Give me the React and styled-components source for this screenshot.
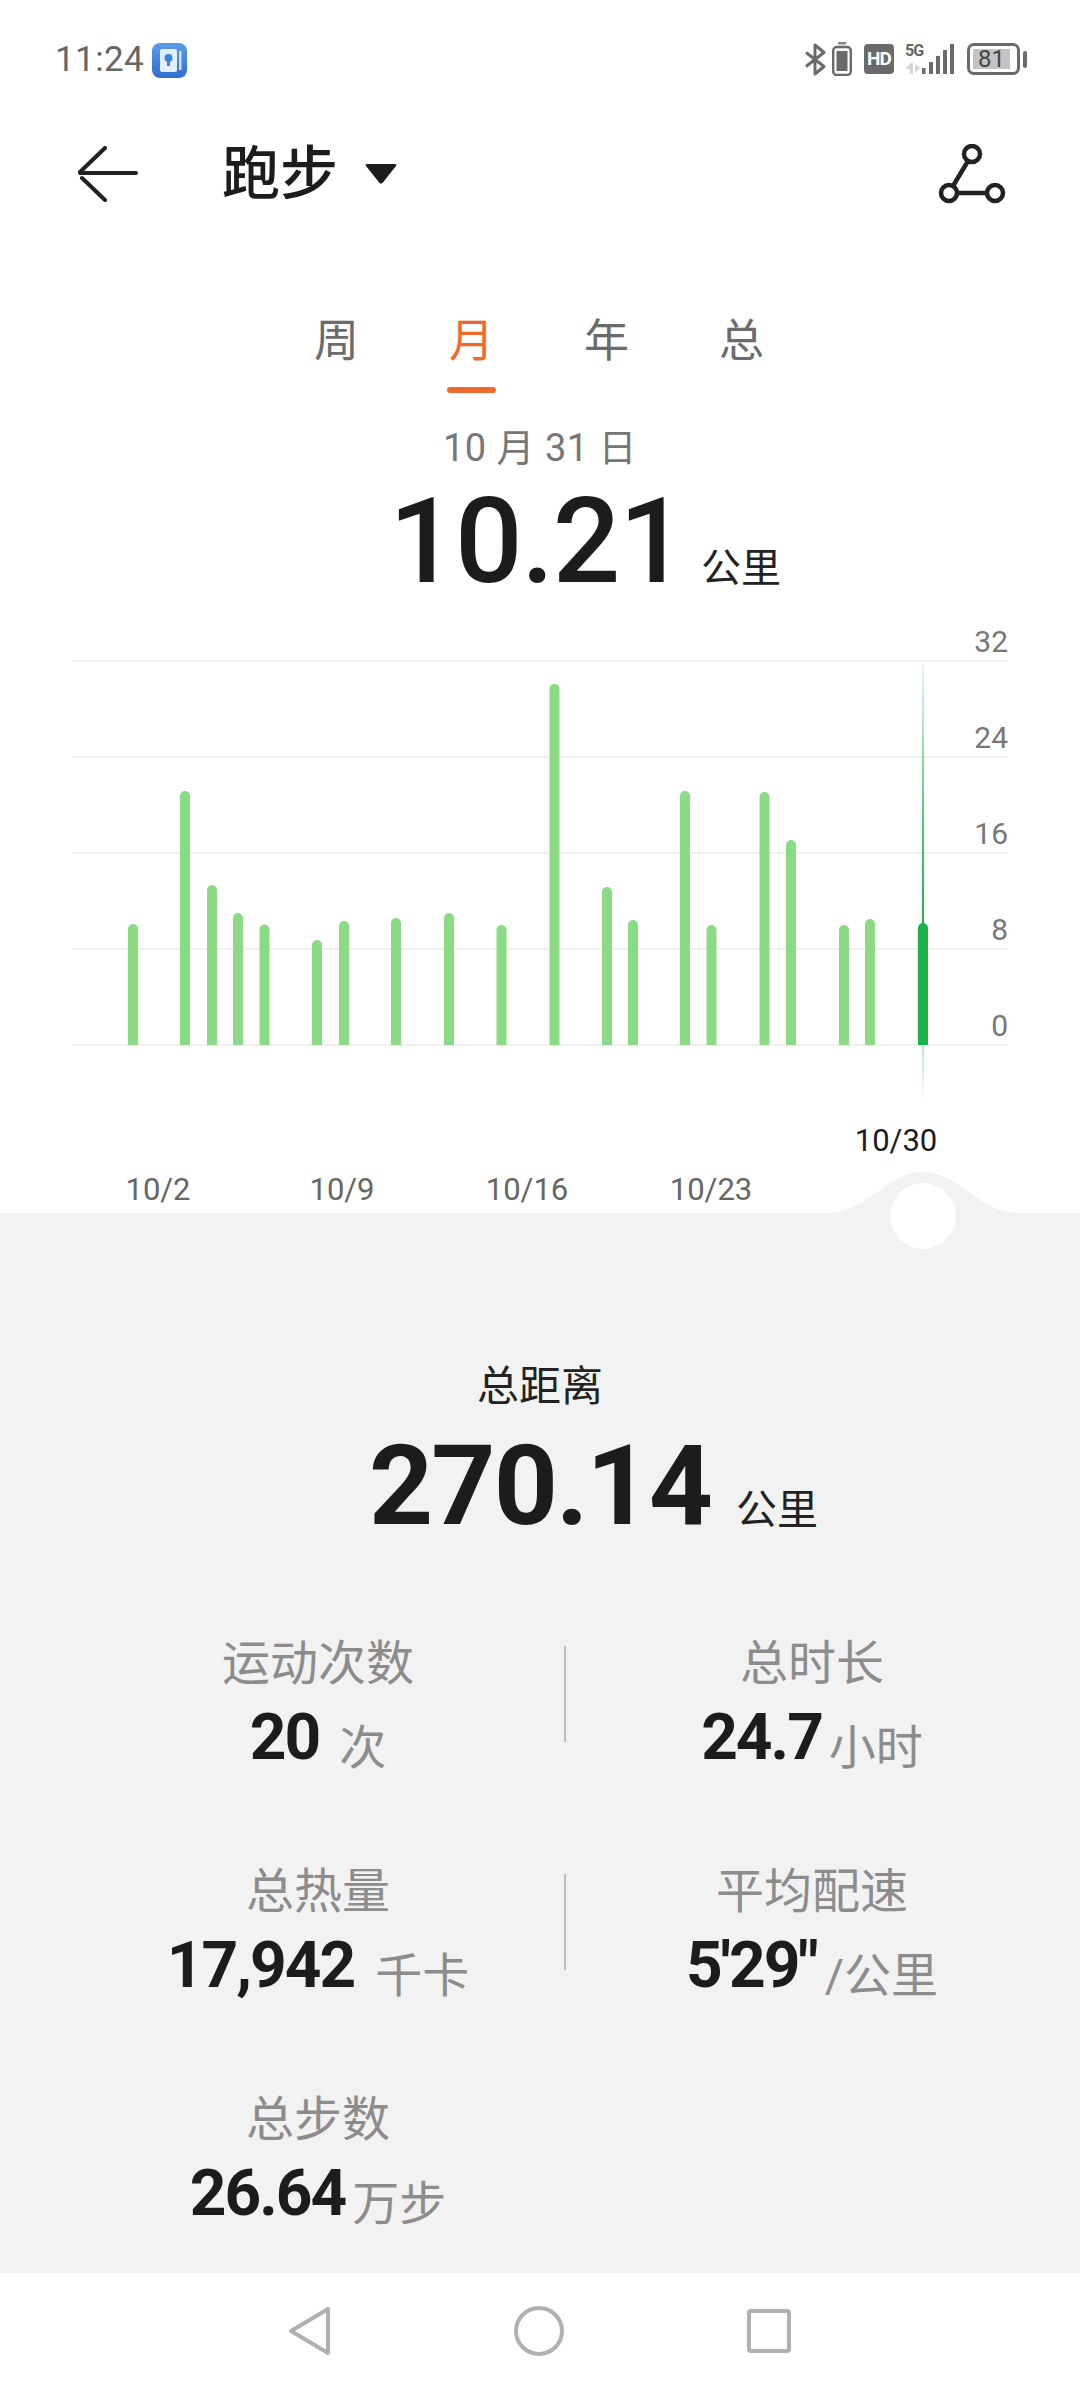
import React from 'react';
import styled, { createGlobalStyle } from 'styled-components';

const GlobalStyle = createGlobalStyle`
  html, body {
    margin: 0;
    padding: 0;
    background: #fff;
  }
  body {
    font-family: Roboto, "Noto Sans CJK SC", sans-serif;
  }
`;

const Page = styled.div`
  width: 1080px;
  height: 2388px;
  overflow: hidden;
  display: flex;
  flex-direction: column;
  background: #fff;
`;

const StatusBar = styled.div`
  height: 118px;
  padding: 0 53px 0 55px;
  display: flex;
  align-items: center;
  justify-content: space-between;
  flex-shrink: 0;
`;
const StatusLeft = styled.div`
  margin-top: 2px;
  display: flex;
  align-items: center;
  gap: 8px;
`;
const Time = styled.span`
  font-size: 35px;
  line-height: 40px;
  letter-spacing: 0.4px;
  color: #666;
`;
const StatusRight = styled.div`
  display: flex;
  align-items: center;
`;
const ChargeIcon = styled.svg`
  margin-left: 6px;
`;
const HdBadge = styled.span`
  width: 30px;
  height: 30px;
  margin: 0 11px 0 12px;
  border-radius: 4px;
  background: #6a6a6a;
  color: #fff;
  font-size: 19px;
  font-weight: 700;
  line-height: 30px;
  letter-spacing: -1px;
  text-align: center;
`;
const NetworkStack = styled.div`
  width: 17px;
  height: 30px;
  display: flex;
  flex-direction: column;
  justify-content: space-between;
`;
const FiveG = styled.span`
  font-size: 16px;
  line-height: 14px;
  font-weight: 700;
  letter-spacing: -1px;
  color: #666;
`;
const Battery = styled.div`
  width: 53px;
  height: 32px;
  margin-left: 13px;
  box-sizing: border-box;
  border: 3px solid #6a6a6a;
  border-radius: 7px;
  padding: 3px;
  display: flex;
`;
const BatteryFill = styled.div`
  width: 37px;
  background: #c4c4c4;
  color: #444;
  font-size: 24px;
  line-height: 20px;
  text-align: center;
`;
const BatteryNub = styled.div`
  width: 4px;
  height: 17px;
  margin-left: 3px;
  border-radius: 2px;
  background: #6a6a6a;
`;

const NavBar = styled.div`
  height: 112px;
  padding: 0 74px 0 76px;
  display: flex;
  align-items: center;
  flex-shrink: 0;
`;
const Title = styled.span`
  margin-left: 84px;
  font-size: 58px;
  line-height: 70px;
  font-weight: 500;
  color: #1c1c1c;
`;
const TitleCaret = styled.svg`
  margin-left: 27px;
`;
const RouteButton = styled.svg`
  margin-left: auto;
`;

const Tabs = styled.div`
  margin-top: 70px;
  margin-left: -2px;
  display: flex;
  justify-content: center;
  flex-shrink: 0;
`;
const Tab = styled.div`
  width: 135px;
  display: flex;
  flex-direction: column;
  align-items: center;
  font-size: 45px;
  line-height: 84px;
  color: ${p => (p.$active ? '#f0682a' : '#6b6b6b')};

  &::after {
    content: '';
    width: 49px;
    height: 6px;
    margin-top: 3px;
    border-radius: 3px;
    background: ${p => (p.$active ? '#ee6a2c' : 'transparent')};
  }
`;

const DateLine = styled.div`
  margin-top: 35px;
  font-size: 38px;
  line-height: 40px;
  letter-spacing: 0.5px;
  color: #777;
  text-align: center;
  flex-shrink: 0;
`;
const DayReading = styled.div`
  height: 152px;
  display: grid;
  grid-template-columns: 1fr auto 1fr;
  align-items: baseline;
  flex-shrink: 0;
`;
const DayNumber = styled.span`
  grid-column: 2;
  margin-right: 6px;
  font-size: 119px;
  line-height: 147px;
  font-weight: 500;
  letter-spacing: -1.5px;
  color: #1c1c1c;
`;
const DayUnit = styled.span`
  margin-left: 10px;
  font-size: 40px;
  color: #222;
`;

const Chart = styled.svg`
  display: block;
  flex-shrink: 0;
`;
const AxisValue = styled.text`
  font-size: 30px;
  fill: #777;
  text-anchor: end;
`;
const AxisDate = styled.text`
  font-size: 31px;
  fill: ${p => (p.$active ? '#1c1c1c' : '#666')};
  text-anchor: middle;
`;

const Panel = styled.div`
  position: relative;
  height: 1060px;
  background: #f2f2f2;
  flex-shrink: 0;
`;
const Hump = styled.svg`
  position: absolute;
  left: 823px;
  top: -41px;
`;
const Knob = styled.div`
  position: absolute;
  left: 890px;
  top: -30px;
  width: 66px;
  height: 66px;
  border-radius: 50%;
  background: #fff;
`;
const TotalLabel = styled.div`
  padding-top: 153px;
  font-size: 42px;
  line-height: 42px;
  color: #222;
  text-align: center;
`;
const TotalReading = styled.div`
  height: 120px;
  margin-top: 18px;
  display: grid;
  grid-template-columns: 1fr auto 1fr;
  align-items: baseline;
`;
const TotalNumber = styled.span`
  grid-column: 2;
  font-size: 112px;
  line-height: 120px;
  font-weight: 700;
  letter-spacing: -2px;
  color: #1c1c1c;
`;
const TotalUnit = styled.span`
  margin-left: 25px;
  font-size: 41px;
  color: #222;
`;

const StatGrid = styled.div`
  margin-top: 92px;
  padding-left: 72px;
  display: grid;
  grid-template-columns: 492px 2px 492px;
  grid-auto-rows: 228px;
`;
const Stat = styled.div`
  grid-column: ${p => (p.$right ? 3 : 1)};
  display: flex;
  flex-direction: column;
  align-items: center;
`;
const StatLabel = styled.div`
  font-size: 48px;
  line-height: 52px;
  color: #8c8c8c;
`;
const StatValue = styled.div`
  margin-top: 10px;
  display: flex;
  align-items: flex-start;
`;
const StatNumber = styled.span`
  font-size: 64px;
  line-height: 76px;
  font-weight: 700;
  letter-spacing: -2px;
  color: #1c1c1c;
`;
const StatUnit = styled.span`
  margin-top: 10px;
  margin-left: ${p => p.$gap}px;
  font-size: 47px;
  line-height: 76px;
  color: #8c8c8c;
`;
const StatDivider = styled.div`
  grid-column: 2;
  width: 2px;
  height: 96px;
  margin-top: 8px;
  background: #bdbdbd;
`;

const SystemNav = styled.div`
  flex: 1;
  display: flex;
  align-items: center;
  justify-content: center;
  gap: 183px;
  padding-top: 1px;
`;

const bars = [
  [133, 924], [185, 791], [212, 885], [238, 913], [264.5, 924.5],
  [317, 940], [344, 921], [396, 918], [449, 913], [501.5, 925],
  [554.5, 684], [607, 887], [633, 920], [685, 791], [711.5, 925],
  [764.5, 792], [791, 840], [844, 925], [870, 919],
];
const gridLines = [
  { y: 661, label: '32' },
  { y: 757, label: '24' },
  { y: 853, label: '16' },
  { y: 949, label: '8' },
  { y: 1045, label: '0' },
];
const dates = [
  { x: 158, label: '10/2' },
  { x: 342, label: '10/9' },
  { x: 527, label: '10/16' },
  { x: 711, label: '10/23' },
];

const barPath = (x, top) =>
  `M${x - 5} 1045V${top + 5}A5 5 0 0 1 ${x + 5} ${top + 5}V1045Z`;

const ActivityChart = () => (
  <Chart width="1080" height="593" viewBox="0 620 1080 593">
    <defs>
      <linearGradient id="cursorTop" x1="0" y1="0" x2="0" y2="1">
        <stop offset="0" stopColor="#1bb34a" stopOpacity="0.1" />
        <stop offset="0.6" stopColor="#1bb34a" stopOpacity="0.75" />
        <stop offset="1" stopColor="#1bb34a" />
      </linearGradient>
      <linearGradient id="cursorBottom" x1="0" y1="0" x2="0" y2="1">
        <stop offset="0" stopColor="#1bb34a" stopOpacity="0.3" />
        <stop offset="1" stopColor="#1bb34a" stopOpacity="0" />
      </linearGradient>
    </defs>
    {gridLines.map(line => (
      <g key={line.label}>
        <rect x="72" y={line.y - 1} width="936" height="2" fill="#f0f0f0" />
        <AxisValue x="1008" y={line.y - 9}>{line.label}</AxisValue>
      </g>
    ))}
    {bars.map(([x, top]) => (
      <path key={x} d={barPath(x, top)} fill="#8adb83" />
    ))}
    <rect x="922" y="664" width="2" height="262" fill="url(#cursorTop)" />
    <rect x="922" y="1045" width="2" height="60" fill="url(#cursorBottom)" />
    <path d={barPath(923, 923)} fill="#1bb34a" />
    <AxisDate $active x="896" y="1151">10/30</AxisDate>
    {dates.map(date => (
      <AxisDate key={date.label} x={date.x} y="1200">{date.label}</AxisDate>
    ))}
  </Chart>
);

const StatBlock = ({ label, value, unit, gap, right }) => (
  <Stat $right={right}>
    <StatLabel>{label}</StatLabel>
    <StatValue>
      <StatNumber>{value}</StatNumber>
      <StatUnit $gap={gap}>{unit}</StatUnit>
    </StatValue>
  </Stat>
);

export default function App() {
  return (
    <Page>
      <GlobalStyle />
      <StatusBar>
        <StatusLeft>
          <Time>11:24</Time>
          <svg width="35" height="35" viewBox="0 0 35 35">
            <defs>
              <linearGradient id="appIcon" x1="0" y1="0" x2="0" y2="1">
                <stop offset="0" stopColor="#5a9be8" />
                <stop offset="1" stopColor="#2f6fd0" />
              </linearGradient>
            </defs>
            <rect width="35" height="35" rx="8" fill="url(#appIcon)" />
            <rect x="8" y="6" width="17" height="23" rx="2" fill="#e4effc" />
            <rect x="27" y="8" width="2.5" height="19" fill="#cfe1f8" />
            <circle cx="16.5" cy="15" r="4" fill="#3f83dc" />
            <rect x="15" y="18" width="3" height="5" fill="#3f83dc" />
          </svg>
        </StatusLeft>
        <StatusRight>
          <svg width="21" height="33" viewBox="0 0 21 33" fill="none" stroke="#6a6a6a" strokeWidth="3" strokeLinejoin="round">
            <path d="M1 9.5 19 23.5 10 31V2l9 7.5L1 23.5" />
          </svg>
          <ChargeIcon width="20" height="34" viewBox="0 0 20 34" fill="none">
            <rect x="6" y="0" width="8" height="2.5" fill="#8a8a8a" />
            <rect x="1.2" y="5" width="17.6" height="28" rx="3.5" stroke="#6a6a6a" strokeWidth="2.4" />
            <rect x="4.5" y="9" width="11" height="20" fill="#6a6a6a" />
          </ChargeIcon>
          <HdBadge>HD</HdBadge>
          <NetworkStack>
            <FiveG>5G</FiveG>
            <svg width="17" height="11" viewBox="0 0 17 11" fill="#d5d5d5">
              <rect x="5" y="0" width="3" height="11" />
              <path d="M5 1 0 6h5zM10 1v9l5-5z" />
            </svg>
          </NetworkStack>
          <svg width="32" height="30" viewBox="0 0 32 30" fill="#6a6a6a">
            <rect x="0" y="24" width="3.5" height="6" />
            <rect x="7" y="18" width="4" height="12" />
            <rect x="14" y="12" width="4" height="18" />
            <rect x="21" y="6" width="4" height="24" />
            <rect x="28" y="0" width="4" height="30" />
          </svg>
          <Battery>
            <BatteryFill>81</BatteryFill>
          </Battery>
          <BatteryNub />
        </StatusRight>
      </StatusBar>

      <NavBar>
        <svg width="62" height="56" viewBox="0 0 62 56" fill="none" stroke="#222" strokeWidth="4" strokeLinecap="round">
          <path d="M4 27H60M29 2 4 26M6 32 29 54" />
        </svg>
        <Title>跑步</Title>
        <TitleCaret width="32" height="20" viewBox="0 0 32 20">
          <path d="M2 0H30Q32 0 31 2L17.5 19Q16 20 14.5 19L1 2Q0 0 2 0Z" fill="#1c1c1c" />
        </TitleCaret>
        <RouteButton width="68" height="60" viewBox="0 0 68 60" fill="none" stroke="#222" strokeWidth="4.5">
          <circle cx="34" cy="10" r="8" />
          <circle cx="11" cy="49" r="8" />
          <circle cx="57" cy="49" r="8" />
          <path d="M30 17 15 42M19 49H49" />
        </RouteButton>
      </NavBar>

      <Tabs>
        <Tab>周</Tab>
        <Tab $active>月</Tab>
        <Tab>年</Tab>
        <Tab>总</Tab>
      </Tabs>

      <DateLine>10 月 31 日</DateLine>
      <DayReading>
        <DayNumber>10.21</DayNumber>
        <DayUnit>公里</DayUnit>
      </DayReading>

      <ActivityChart />

      <Panel>
        <Hump width="200" height="42" viewBox="0 0 200 42">
          <path d="M0 41.5C47 41.5 62 0 100 0C138 0 153 41.5 200 41.5V42H0Z" fill="#f2f2f2" />
        </Hump>
        <Knob />
        <TotalLabel>总距离</TotalLabel>
        <TotalReading>
          <TotalNumber>270.14</TotalNumber>
          <TotalUnit>公里</TotalUnit>
        </TotalReading>
        <StatGrid>
          <StatBlock label="运动次数" value="20" unit="次" gap={20} />
          <StatDivider />
          <StatBlock right label="总时长" value="24.7" unit="小时" gap={7} />
          <StatBlock label="总热量" value="17,942" unit="千卡" gap={21} />
          <StatDivider />
          <StatBlock right label="平均配速" value={`5'29"`} unit="/公里" gap={8} />
          <StatBlock label="总步数" value="26.64" unit="万步" gap={7} />
        </StatGrid>
      </Panel>

      <SystemNav>
        <svg width="42" height="48" viewBox="0 0 42 48" fill="none" stroke="#b0b0b0" strokeWidth="4" strokeLinejoin="round">
          <path d="M39 2V46L2 24Z" />
        </svg>
        <svg width="50" height="50" viewBox="0 0 50 50" fill="none" stroke="#b0b0b0" strokeWidth="4">
          <circle cx="25" cy="25" r="23" />
        </svg>
        <svg width="44" height="44" viewBox="0 0 44 44" fill="none" stroke="#b0b0b0" strokeWidth="4" strokeLinejoin="round">
          <rect x="2" y="2" width="40" height="40" rx="2" />
        </svg>
      </SystemNav>
    </Page>
  );
}
